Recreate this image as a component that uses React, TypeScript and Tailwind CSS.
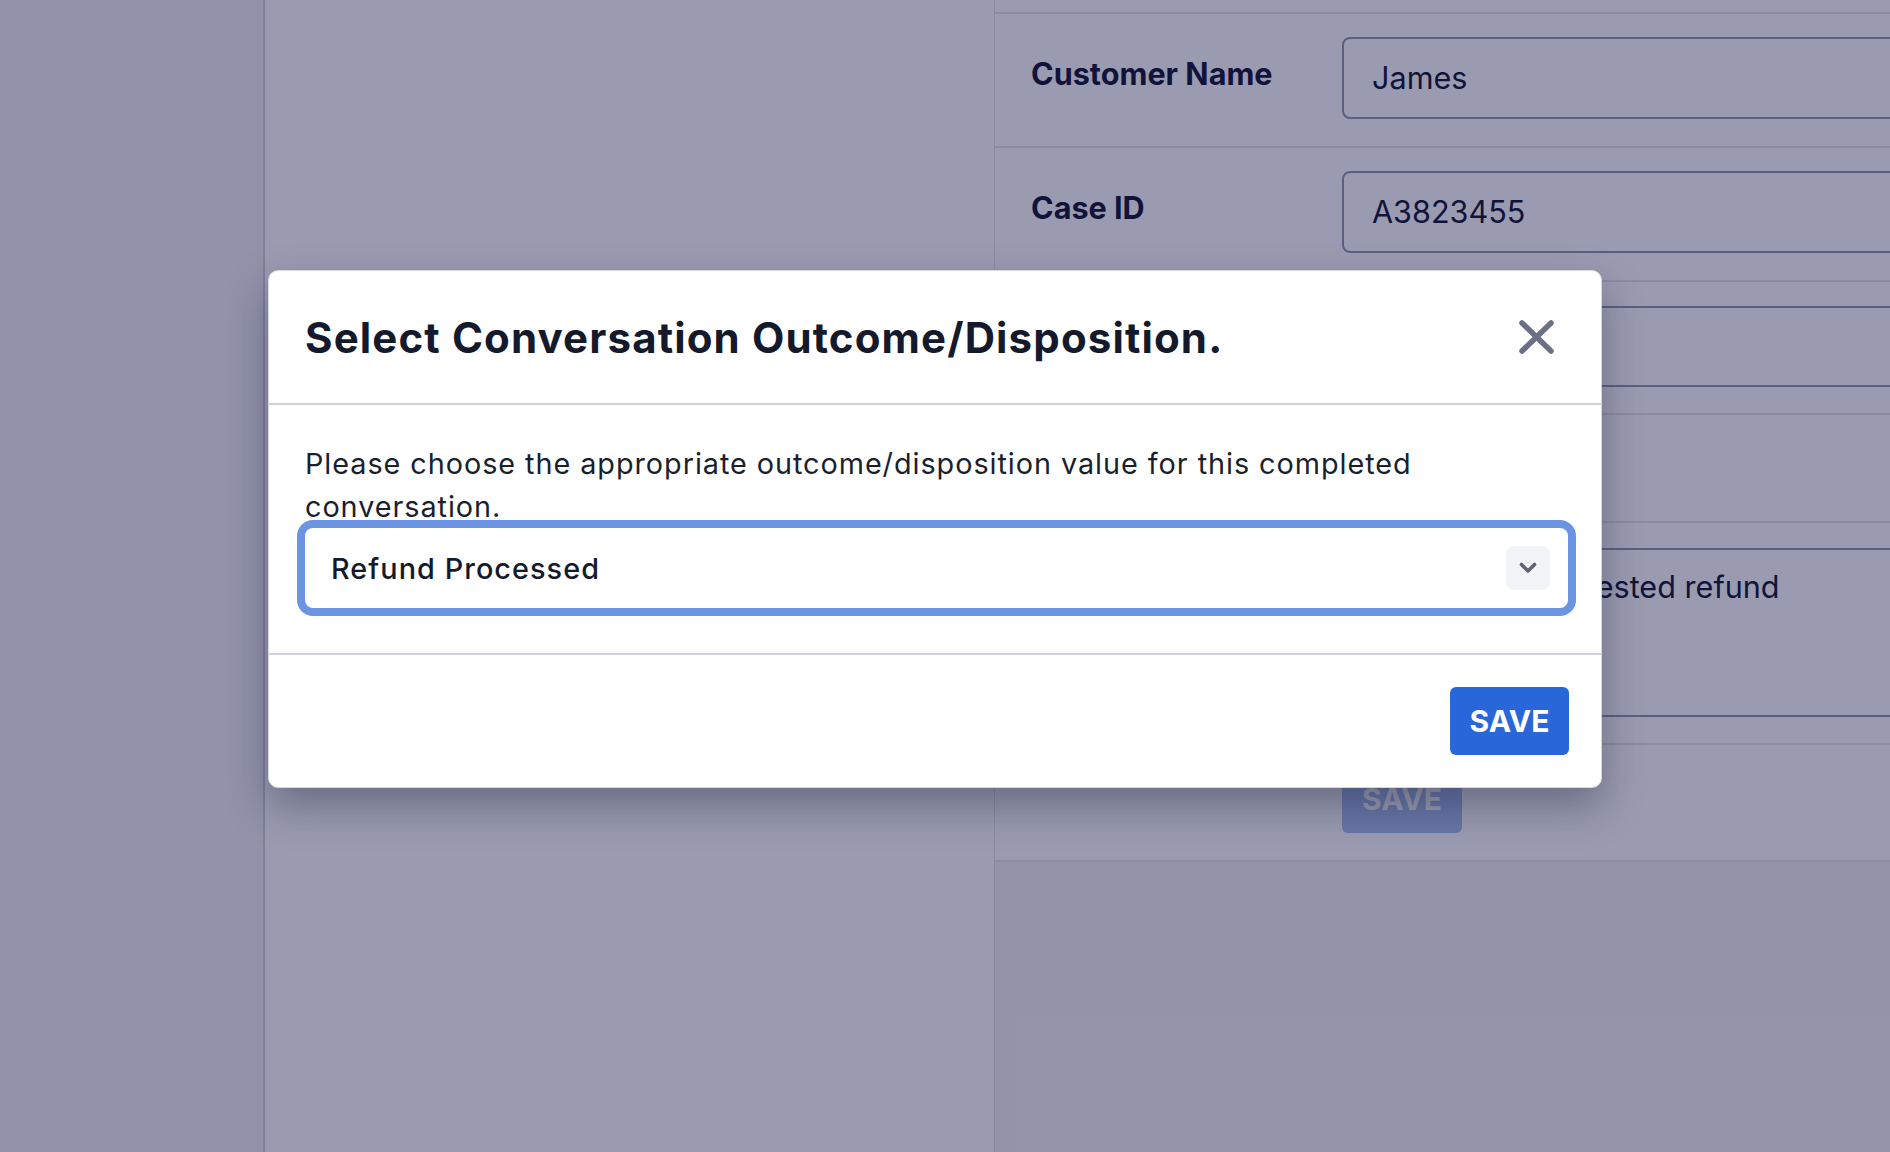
import React from "react";

function Row({ label, height, top, children }: { label?: string; height: string; top: string; children?: React.ReactNode }) {
  return (
    <div className={`flex border-b-2 border-[#e6e7ea] pl-[36px] ${height} ${top}`}>
      <div className="w-[311px] shrink-0 text-[30.6px] font-bold leading-[74px] text-[#1b1d3c]">{label}</div>
      {children}
    </div>
  );
}

export default function App() {
  return (
    <div className="relative flex h-[1152px] w-[1890px] overflow-hidden font-['Inter',sans-serif]">
      {/* Sidebar */}
      <div className="w-[265px] shrink-0 border-r-2 border-[#cfd0dd] bg-[#f2f2f5]" />

      {/* Middle column */}
      <div className="w-[730px] shrink-0 border-r border-[#e4e5ea] bg-white" />

      {/* Case details */}
      <div className="flex w-[1100px] shrink-0 flex-col bg-[#f4f4f6]">
        <div className="bg-white">
          <div className="h-[14px] border-b-2 border-[#e6e7ea]" />
          <Row label="Customer Name" height="h-[134px]" top="pt-[23px]">
            <div className="flex h-[82px] flex-1 items-center rounded-[8px] border-2 border-[#979bb3] pl-[28px] text-[30.6px] text-[#1b1d3c]">
              James
            </div>
          </Row>
          <Row label="Case ID" height="h-[134px]" top="pt-[23px]">
            <div className="flex h-[82px] flex-1 items-center rounded-[8px] border-2 border-[#979bb3] pl-[28px] text-[30.6px] text-[#1b1d3c]">
              A3823455
            </div>
          </Row>
          <Row height="h-[133px]" top="pt-[24px]">
            <div className="h-[81px] flex-1 rounded-[8px] border-2 border-[#979bb3]" />
          </Row>
          <Row height="h-[108px]" top="pt-[17px]" />
          <Row height="h-[222px]" top="pt-[25px]">
            <div className="h-[169px] flex-1 rounded-[8px] border-2 border-[#979bb3] pl-[186px] pt-[14px] text-[30.6px] leading-[46px] text-[#1b1d3c]">
              requested refund
            </div>
          </Row>
          <Row height="h-[117px]" top="pt-[20px]">
            <button className="h-[68px] w-[120px] rounded-[6px] bg-[#2866d9] text-[30px] font-bold text-white opacity-40">
              SAVE
            </button>
          </Row>
        </div>
      </div>

      {/* Overlay */}
      <div className="absolute inset-0 bg-[#03053a]/40" />

      {/* Dialog */}
      <div className="absolute left-[268px] top-[270px] w-[1334px] rounded-[10px] border border-[#d4d6de] bg-white shadow-[0_18px_40px_rgba(20,22,50,0.35)]">
        <div className="flex h-[134px] items-center justify-between border-b-2 border-[#cfd2db] pl-[36px] pr-[46px]">
          <h2 className="text-[42px] font-bold tracking-[0.027em] text-[#141a2b]">
            Select Conversation Outcome/Disposition.
          </h2>
          <button className="text-[#6b7086]" aria-label="Close">
            <svg width="37" height="36" viewBox="0 0 37 36" fill="none" stroke="currentColor" strokeWidth="5.5" strokeLinecap="round">
              <path d="M4 4L33 32M33 4L4 32" />
            </svg>
          </button>
        </div>
        <div className="pb-[45px] pl-[36px] pr-[33px] pt-[37px]">
          <p className="text-[28.8px] leading-[43.2px] tracking-[0.033em] text-[#1a1f2e]">
            Please choose the appropriate outcome/disposition value for this completed conversation.
          </p>
          <div className="flex h-[80px] items-center justify-between rounded-[8px] bg-white pl-[26px] pr-[18px] ring-8 ring-[#6b94e2]">
            <span className="text-[28.8px] font-medium tracking-[0.037em] text-[#141a2b]">Refund Processed</span>
            <span className="flex h-[44px] w-[44px] items-center justify-center rounded-[8px] bg-[#f3f4f6] text-[#5f6279]">
              <svg width="18" height="12" viewBox="0 0 18 12" fill="none" stroke="currentColor" strokeWidth="3.6" strokeLinecap="round" strokeLinejoin="round">
                <path d="M2.5 2.5L9 9L15.5 2.5" />
              </svg>
            </span>
          </div>
        </div>
        <div className="flex h-[134px] items-center justify-end border-t-2 border-[#cfd2db] pr-[32px]">
          <button className="h-[68px] w-[119px] rounded-[6px] bg-[#2866d9] text-[30px] font-bold text-white">SAVE</button>
        </div>
      </div>
    </div>
  );
}
